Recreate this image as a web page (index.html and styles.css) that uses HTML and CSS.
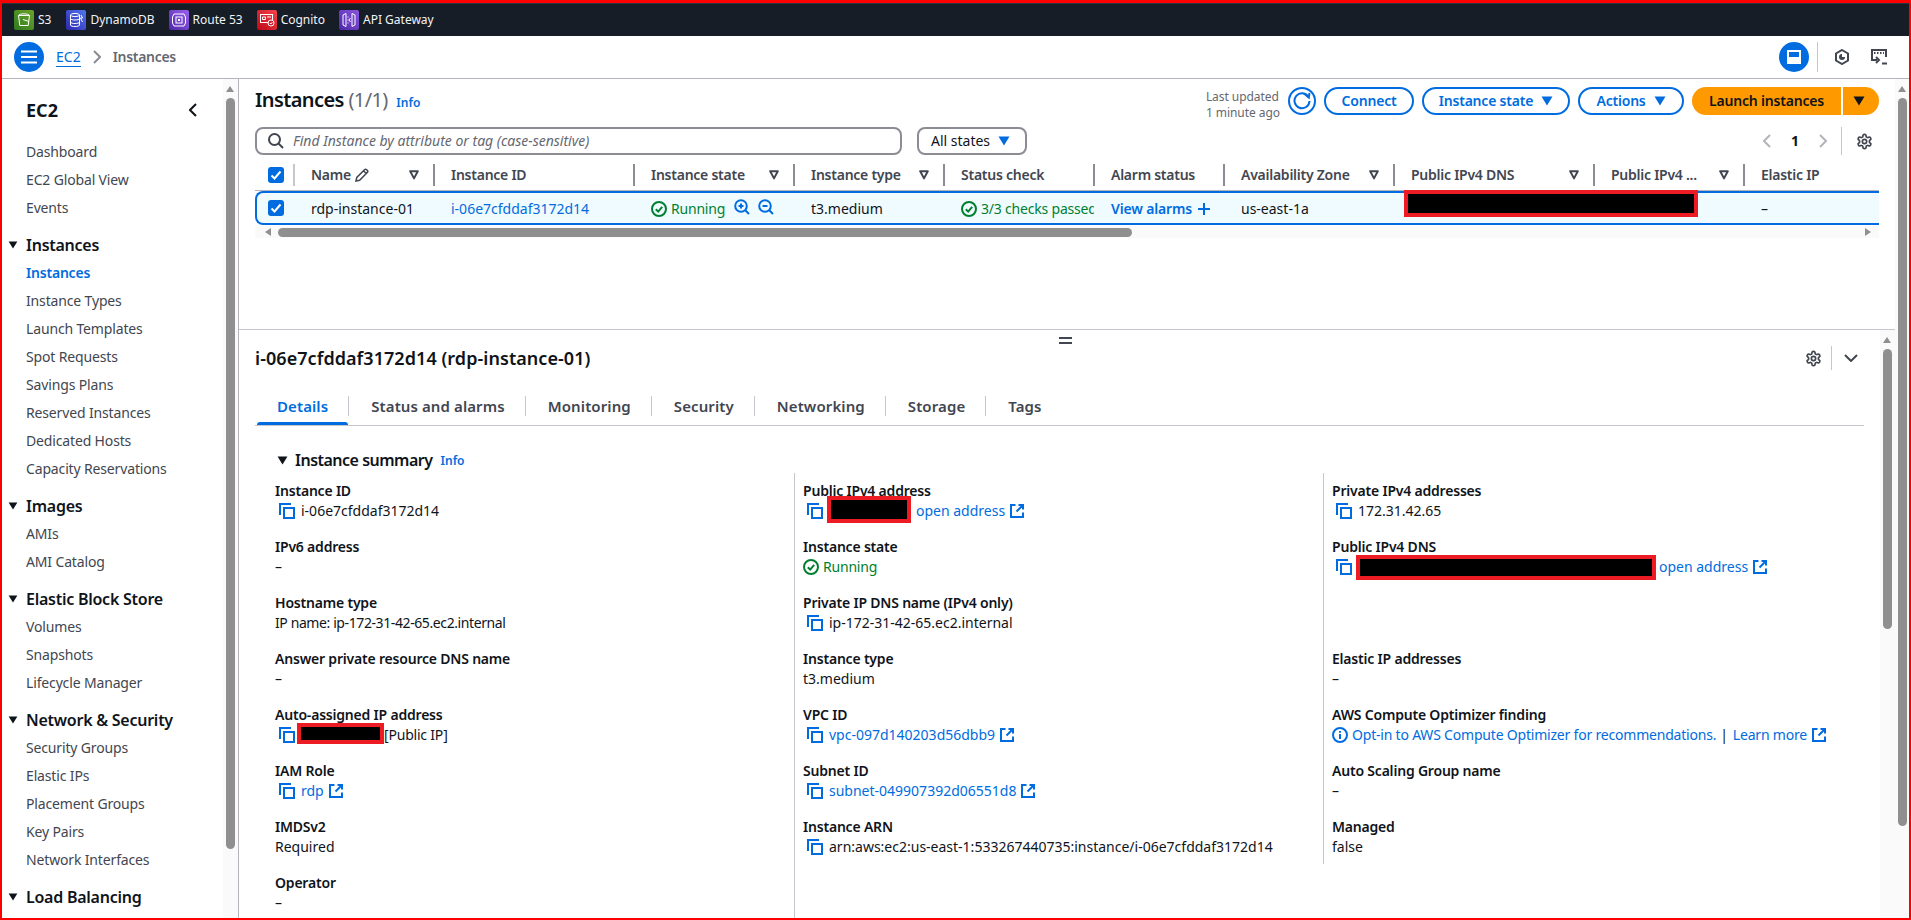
FILE: index.html
```html
<!DOCTYPE html>
<html lang="en">
<head>
<meta charset="utf-8">
<title>Instances | EC2</title>
<link rel="stylesheet" href="styles.css">
</head>
<body>
<svg class="sprite" aria-hidden="true">
  <symbol id="copy" viewBox="0 0 16 16"><path d="M1 12V1h11" fill="none" stroke="currentColor" stroke-width="2"/><rect x="5" y="5" width="10" height="10" fill="none" stroke="currentColor" stroke-width="2"/></symbol>
  <symbol id="ext" viewBox="0 0 14 14"><path d="M5.5 1H1v12h12V8.5" fill="none" stroke="currentColor" stroke-width="2"/><path d="M8.5 1H13v4.5M13 1 6.5 7.5" fill="none" stroke="currentColor" stroke-width="2"/></symbol>
  <symbol id="ok" viewBox="0 0 16 16"><circle cx="8" cy="8" r="7" fill="none" stroke="currentColor" stroke-width="2"/><path d="M4.8 8.2 7.2 10.6 11.2 5.8" fill="none" stroke="currentColor" stroke-width="2"/></symbol>
  <symbol id="filter" viewBox="0 0 10 10"><path d="M1.2 1.2h7.6L5 8.4z" fill="none" stroke="currentColor" stroke-width="2" stroke-linejoin="round"/></symbol>
  <symbol id="caret" viewBox="0 0 12 10"><path d="M0.5 0.5h11L6 9.5z" fill="currentColor"/></symbol>
  <symbol id="gear" viewBox="0 0 24 24"><path d="M12.22 2h-.44a2 2 0 0 0-2 2v.18a2 2 0 0 1-1 1.73l-.43.25a2 2 0 0 1-2 0l-.15-.08a2 2 0 0 0-2.73.73l-.22.38a2 2 0 0 0 .73 2.73l.15.1a2 2 0 0 1 1 1.72v.51a2 2 0 0 1-1 1.74l-.15.09a2 2 0 0 0-.73 2.73l.22.38a2 2 0 0 0 2.73.73l.15-.08a2 2 0 0 1 2 0l.43.25a2 2 0 0 1 1 1.73V20a2 2 0 0 0 2 2h.44a2 2 0 0 0 2-2v-.18a2 2 0 0 1 1-1.73l.43-.25a2 2 0 0 1 2 0l.15.08a2 2 0 0 0 2.73-.73l.22-.39a2 2 0 0 0-.73-2.73l-.15-.08a2 2 0 0 1-1-1.74v-.5a2 2 0 0 1 1-1.74l.15-.09a2 2 0 0 0 .73-2.73l-.22-.38a2 2 0 0 0-2.73-.73l-.15.08a2 2 0 0 1-2 0l-.43-.25a2 2 0 0 1-1-1.73V4a2 2 0 0 0-2-2z" fill="none" stroke="currentColor" stroke-width="2.4"/><circle cx="12" cy="12" r="3" fill="none" stroke="currentColor" stroke-width="2.4"/></symbol>
</svg>

<header class="topbar">
  <a class="svc svc-first"><span class="svc-ico green"><svg viewBox="0 0 20 20"><path d="M4.5 5.5h11l-1.3 10h-8.400zM4.500 5.500c1-2.200 10-2.200 11 0M9 9.500l6 2" fill="none" stroke="#fff" stroke-width="1"/></svg></span>S3</a>
  <a class="svc"><span class="svc-ico blue"><svg viewBox="0 0 20 20"><ellipse cx="9" cy="5" rx="4.500" ry="1.600" fill="none" stroke="#fff"/><path d="M4.500 5v10c0 2 9 2 9 0V5M4.500 8.500c0 2 9 2 9 0M4.500 12c0 2 9 2 9 0M15 5l1.500 3h-2l2 4" fill="none" stroke="#fff"/></svg></span>DynamoDB</a>
  <a class="svc"><span class="svc-ico purple"><svg viewBox="0 0 20 20"><path d="M5 4h10l1.500 3v6L15 16H5l-1.500-3V7z" fill="none" stroke="#fff"/><rect x="7" y="7" width="6" height="6" fill="none" stroke="#fff"/><path d="M9 9h2v2H9z" fill="#fff"/></svg></span>Route 53</a>
  <a class="svc"><span class="svc-ico red"><svg viewBox="0 0 20 20"><rect x="3.500" y="4.500" width="12" height="8" fill="none" stroke="#fff"/><path d="M5.500 7h3v2.500h-3zM10 7h4" fill="none" stroke="#fff"/><circle cx="14" cy="13" r="3" fill="#d3202f" stroke="#fff"/><path d="M12.800 13l1 1 1.500-1.800" fill="none" stroke="#fff"/></svg></span>Cognito</a>
  <a class="svc"><span class="svc-ico violet"><svg viewBox="0 0 20 20"><path d="M7 3.500 4 5v10l3 1.500zM13 3.500 16 5v10l-3 1.500zM9 6.500v1M9 9.500v1M9 12.500v1M11.500 8l-1.500 2 1.500 2" fill="none" stroke="#fff"/></svg></span>API Gateway</a>
</header>

<div class="crumbs">
  <button class="round-btn" aria-label="Menu"><svg class="i-16" viewBox="0 0 16 16"><path d="M0 2.500h16M0 8h16M0 13.500h16" stroke="#fff" stroke-width="2"/></svg></button>
  <a class="crumb-link">EC2</a>
  <svg class="crumb-sep" viewBox="0 0 8 14"><path d="M1 1l6 6-6 6" fill="none" stroke="#8c8c94" stroke-width="2"/></svg>
  <span class="crumb-current">Instances</span>
  <span class="crumb-space"></span>
  <button class="round-btn" aria-label="Panel"><svg class="i-14" viewBox="0 0 14 14"><rect x="1" y="1" width="12" height="12" fill="none" stroke="#fff" stroke-width="2"/><rect x="1" y="7" width="12" height="6" fill="#fff"/></svg></button>
  <span class="crumb-div"></span>
  <svg class="crumb-ico hex" viewBox="0 0 16 16"><path d="M8 1l6 3.500v7L8 15l-6-3.500v-7z" fill="none" stroke="#424650" stroke-width="2"/><path d="M8 5a3 3 0 1 0 3 3H8z" fill="#424650"/></svg>
  <svg class="crumb-ico term" viewBox="0 0 16 16"><path d="M6 11H1V1h14v7" fill="none" stroke="#424650" stroke-width="2"/><path d="M3 4h1.500M6 4h1.500M9 4h1.500M12 4h1" stroke="#424650" stroke-width="2"/><path d="M5 8l3 3-3 3M11 14.500h5" fill="none" stroke="#424650" stroke-width="2"/></svg>
</div>

<div class="layout">
  <aside class="sidebar">
    <nav class="nav">
      <div class="nav-title"><span>EC2</span><svg class="nav-close" viewBox="0 0 8 14"><path d="M7 1 1 7l6 6" fill="none" stroke="#0f141a" stroke-width="2"/></svg></div>
      <a class="nav-item">Dashboard</a>
      <a class="nav-item">EC2 Global View</a>
      <a class="nav-item">Events</a>
      <div class="nav-head"><svg class="nav-tri"><use href="#caret"/></svg>Instances</div>
      <a class="nav-item active">Instances</a>
      <a class="nav-item">Instance Types</a>
      <a class="nav-item">Launch Templates</a>
      <a class="nav-item">Spot Requests</a>
      <a class="nav-item">Savings Plans</a>
      <a class="nav-item">Reserved Instances</a>
      <a class="nav-item">Dedicated Hosts</a>
      <a class="nav-item">Capacity Reservations</a>
      <div class="nav-head"><svg class="nav-tri"><use href="#caret"/></svg>Images</div>
      <a class="nav-item">AMIs</a>
      <a class="nav-item">AMI Catalog</a>
      <div class="nav-head"><svg class="nav-tri"><use href="#caret"/></svg>Elastic Block Store</div>
      <a class="nav-item">Volumes</a>
      <a class="nav-item">Snapshots</a>
      <a class="nav-item">Lifecycle Manager</a>
      <div class="nav-head"><svg class="nav-tri"><use href="#caret"/></svg>Network &amp; Security</div>
      <a class="nav-item">Security Groups</a>
      <a class="nav-item">Elastic IPs</a>
      <a class="nav-item">Placement Groups</a>
      <a class="nav-item">Key Pairs</a>
      <a class="nav-item">Network Interfaces</a>
      <div class="nav-head"><svg class="nav-tri"><use href="#caret"/></svg>Load Balancing</div>
    </nav>
    <div class="vscroll"><span class="arrow-up"></span><span class="thumb thumb-side"></span></div>
  </aside>

  <main class="panes">
    <section class="upper">
      <div class="hdr">
        <h1 class="hdr-title">Instances <span class="count">(1/1)</span> <a class="info">Info</a></h1>
        <div class="hdr-actions">
          <div class="updated">Last updated<br>1 minute ago</div>
          <button class="btn btn-icon" aria-label="Refresh"><svg class="i-18" viewBox="0 0 18 18"><path d="M15.500 5A7.500 7.500 0 1 0 16.500 9" fill="none" stroke="currentColor" stroke-width="2"/><path d="M11 1.500 15.800 5.500 16.500 1" fill="none" stroke="currentColor" stroke-width="2"/></svg></button>
          <button class="btn btn-connect">Connect</button>
          <button class="btn btn-state">Instance state <svg class="caret"><use href="#caret"/></svg></button>
          <button class="btn btn-actions">Actions <svg class="caret"><use href="#caret"/></svg></button>
          <div class="launch"><button class="launch-main">Launch instances</button><button class="launch-drop" aria-label="More"><svg class="caret dark"><use href="#caret"/></svg></button></div>
        </div>
      </div>
      <div class="filters">
        <div class="search"><svg class="i-16 muted" viewBox="0 0 16 16"><circle cx="6.500" cy="6.500" r="5.500" fill="none" stroke="currentColor" stroke-width="2"/><path d="M10.500 10.500 15 15" stroke="currentColor" stroke-width="2"/></svg><span>Find Instance by attribute or tag (case-sensitive)</span></div>
        <div class="states">All states <svg class="caret"><use href="#caret"/></svg></div>
        <div class="pager">
          <svg class="pg-chev" viewBox="0 0 8 14"><path d="M7 1 1 7l6 6" fill="none" stroke="#b4b4bb" stroke-width="2"/></svg>
          <b class="pg-num">1</b>
          <svg class="pg-chev" viewBox="0 0 8 14"><path d="M1 1l6 6-6 6" fill="none" stroke="#b4b4bb" stroke-width="2"/></svg>
          <span class="pg-div"></span>
          <svg class="gear"><use href="#gear"/></svg>
        </div>
      </div>
      <div class="thead">
        <div class="th th-check"><span class="check"><svg viewBox="0 0 16 16"><path d="M3.500 8.500 6.500 11.500 12.500 4.500" fill="none" stroke="#fff" stroke-width="2"/></svg></span></div>
        <div class="th"><span class="th-name">Name <svg class="pencil" viewBox="0 0 14 14"><path d="M1 13l.8-3.600L9.500 1.700a1.500 1.500 0 0 1 2.100 0l.7.700a1.500 1.500 0 0 1 0 2.100L4.600 12.200zM8.500 2.800l2.700 2.700" fill="none" stroke="#424650" stroke-width="1.500"/></svg></span><svg class="flt"><use href="#filter"/></svg></div>
        <div class="th">Instance ID</div>
        <div class="th">Instance state<svg class="flt"><use href="#filter"/></svg></div>
        <div class="th">Instance type<svg class="flt"><use href="#filter"/></svg></div>
        <div class="th">Status check</div>
        <div class="th">Alarm status</div>
        <div class="th">Availability Zone<svg class="flt"><use href="#filter"/></svg></div>
        <div class="th">Public IPv4 DNS<svg class="flt"><use href="#filter"/></svg></div>
        <div class="th">Public IPv4 ...<svg class="flt"><use href="#filter"/></svg></div>
        <div class="th th-last">Elastic IP</div>
      </div>
      <div class="trow">
        <div class="td td-check"><span class="check"><svg viewBox="0 0 16 16"><path d="M3.500 8.500 6.500 11.500 12.500 4.500" fill="none" stroke="#fff" stroke-width="2"/></svg></span></div>
        <div class="td">rdp-instance-01</div>
        <div class="td"><a class="link">i-06e7cfddaf3172d14</a></div>
        <div class="td good"><svg class="i-16"><use href="#ok"/></svg><span class="narrow">Running</span><svg class="zoom-ico first" viewBox="0 0 16 16"><circle cx="7" cy="7" r="5.800" fill="none" stroke="currentColor" stroke-width="2"/><path d="M11 11l4 4M4.500 7h5M7 4.500v5" stroke="currentColor" stroke-width="2"/></svg><svg class="zoom-ico" viewBox="0 0 16 16"><circle cx="7" cy="7" r="5.800" fill="none" stroke="currentColor" stroke-width="2"/><path d="M11 11l4 4M4.500 7h5" stroke="currentColor" stroke-width="2"/></svg></div>
        <div class="td">t3.medium</div>
        <div class="td good"><svg class="i-16"><use href="#ok"/></svg><span class="narrow">3/3 checks passed</span></div>
        <div class="td"><a class="link strong">View alarms</a><svg class="plus" viewBox="0 0 12 12"><path d="M6 0v12M0 6h12" stroke="#006ce0" stroke-width="2"/></svg></div>
        <div class="td">us-east-1a</div>
        <div class="td td-anchor"><span class="redact redact-row"></span></div>
        <div class="td"></div>
        <div class="td">–</div>
      </div>
      <div class="hscroll"><span class="arrow-left"></span><span class="thumb thumb-h"></span><span class="arrow-right"></span></div>
    </section>

    <section class="lower">
      <span class="handle"></span>
      <div class="lower-body">
        <div class="detail-head">
          <h2 class="detail-title">i-06e7cfddaf3172d14 (rdp-instance-01)</h2>
          <svg class="gear"><use href="#gear"/></svg>
          <span class="pg-div short"></span>
          <svg class="chev-down" viewBox="0 0 14 8"><path d="M1 1l6 6 6-6" fill="none" stroke="#424650" stroke-width="2"/></svg>
        </div>
        <div class="tabs">
          <a class="tab active">Details</a>
          <a class="tab">Status and alarms</a>
          <a class="tab">Monitoring</a>
          <a class="tab">Security</a>
          <a class="tab">Networking</a>
          <a class="tab">Storage</a>
          <a class="tab last">Tags</a>
        </div>
        <div class="summary-head"><svg class="sum-tri"><use href="#caret"/></svg><span>Instance summary</span><a class="info">Info</a></div>
        <div class="cols">
          <div class="col col-a">
            <div class="field"><div class="lbl">Instance ID</div><div class="val"><svg class="copy"><use href="#copy"/></svg>i-06e7cfddaf3172d14</div></div>
            <div class="field"><div class="lbl">IPv6 address</div><div class="val">–</div></div>
            <div class="field"><div class="lbl">Hostname type</div><div class="val snug">IP name: ip-172-31-42-65.ec2.internal</div></div>
            <div class="field"><div class="lbl">Answer private resource DNS name</div><div class="val">–</div></div>
            <div class="field"><div class="lbl">Auto-assigned IP address</div><div class="val"><svg class="copy tight"><use href="#copy"/></svg><span class="redact redact-auto"></span><span class="narrow">[Public IP]</span></div></div>
            <div class="field"><div class="lbl">IAM Role</div><div class="val"><svg class="copy"><use href="#copy"/></svg><a class="link">rdp</a><svg class="ext"><use href="#ext"/></svg></div></div>
            <div class="field"><div class="lbl">IMDSv2</div><div class="val">Required</div></div>
            <div class="field"><div class="lbl">Operator</div><div class="val">–</div></div>
          </div>
          <div class="col col-b">
            <div class="field"><div class="lbl">Public IPv4 address</div><div class="val"><svg class="copy tight"><use href="#copy"/></svg><span class="redact redact-ip"></span><a class="link">open address</a><svg class="ext"><use href="#ext"/></svg></div></div>
            <div class="field"><div class="lbl">Instance state</div><div class="val good"><svg class="i-16"><use href="#ok"/></svg><span class="narrow">Running</span></div></div>
            <div class="field"><div class="lbl">Private IP DNS name (IPv4 only)</div><div class="val"><svg class="copy"><use href="#copy"/></svg>ip-172-31-42-65.ec2.internal</div></div>
            <div class="field"><div class="lbl">Instance type</div><div class="val">t3.medium</div></div>
            <div class="field"><div class="lbl">VPC ID</div><div class="val"><svg class="copy"><use href="#copy"/></svg><a class="link">vpc-097d140203d56dbb9</a><svg class="ext"><use href="#ext"/></svg></div></div>
            <div class="field"><div class="lbl">Subnet ID</div><div class="val"><svg class="copy"><use href="#copy"/></svg><a class="link">subnet-049907392d06551d8</a><svg class="ext"><use href="#ext"/></svg></div></div>
            <div class="field"><div class="lbl">Instance ARN</div><div class="val"><svg class="copy"><use href="#copy"/></svg>arn:aws:ec2:us-east-1:533267440735:instance/i-06e7cfddaf3172d14</div></div>
          </div>
          <div class="col col-c">
            <div class="field"><div class="lbl">Private IPv4 addresses</div><div class="val"><svg class="copy"><use href="#copy"/></svg>172.31.42.65</div></div>
            <div class="field"><div class="lbl">Public IPv4 DNS</div><div class="val"><svg class="copy tight"><use href="#copy"/></svg><span class="redact redact-dns"></span><a class="link">open address</a><svg class="ext"><use href="#ext"/></svg></div></div>
            <div class="field"></div>
            <div class="field"><div class="lbl">Elastic IP addresses</div><div class="val">–</div></div>
            <div class="field"><div class="lbl">AWS Compute Optimizer finding</div><div class="val narrow"><svg class="info-ico" viewBox="0 0 16 16"><circle cx="8" cy="8" r="7" fill="none" stroke="currentColor" stroke-width="2"/><path d="M8 7v5M8 4v1.800" stroke="currentColor" stroke-width="2"/></svg><a class="link">Opt-in to AWS Compute Optimizer for recommendations.</a><span class="pipe">|</span><a class="link">Learn more</a><svg class="ext"><use href="#ext"/></svg></div></div>
            <div class="field"><div class="lbl">Auto Scaling Group name</div><div class="val">–</div></div>
            <div class="field"><div class="lbl">Managed</div><div class="val">false</div></div>
          </div>
        </div>
      </div>
      <div class="vscroll inner"><span class="arrow-up"></span><span class="thumb thumb-inner"></span></div>
    </section>
  </main>
  <div class="vscroll outer"><span class="arrow-up"></span><span class="thumb thumb-outer"></span></div>
</div>
</body>
</html>
```

FILE: styles.css
```css
* { box-sizing: border-box; }
html, body { margin: 0; height: 100%; }
body {
  height: 920px;
  overflow: hidden;
  border: 2px solid #ff0000;
  border-top-width: 3px;
  background: #fff;
  color: #0f141a;
  font-family: "Noto Sans", "Open Sans", sans-serif;
  font-size: 14px;
  line-height: 20px;
  display: flex;
  flex-direction: column;
}
h1, h2 { margin: 0; }
button { font: inherit; padding: 0; border: 0; background: none; }
a { color: inherit; text-decoration: none; }
.sprite { width: 0; height: 0; display: block; overflow: hidden; flex: none; }
.i-14 { width: 14px; height: 14px; }
.i-16 { width: 16px; height: 16px; flex: none; }
.i-18 { width: 18px; height: 18px; }
.narrow { letter-spacing: -0.2px; }
.snug { letter-spacing: -0.4px; }

/* top bar */
.topbar {
  height: 33px;
  flex: none;
  background: #161d26;
  border-top: 1px solid #2b3340;
  display: flex;
  align-items: center;
  padding-left: 12px;
  gap: 14px;
  color: #f3f3f7;
  font-size: 12px;
}
.svc { display: flex; align-items: center; gap: 4px; }
.svc-first { margin-right: 1px; }
.svc-ico { width: 20px; height: 20px; border-radius: 2px; display: block; }
.svc-ico svg { width: 20px; height: 20px; display: block; }
.green { background: linear-gradient(45deg, #2f7a1f, #6aa52a); }
.blue { background: linear-gradient(45deg, #2e27ad, #5076f0); }
.purple { background: linear-gradient(45deg, #4d27a8, #9a60f0); }
.red { background: linear-gradient(45deg, #bd0816, #f6454f); }
.violet { background: linear-gradient(45deg, #4d27a8, #8a55e0); }

/* breadcrumbs */
.crumbs {
  height: 43px;
  flex: none;
  border-bottom: 1px solid #b4b4bb;
  display: flex;
  align-items: center;
  padding: 0 22px 0 12px;
}
.round-btn {
  width: 30px; height: 30px; border-radius: 50%;
  background: #006ce0;
  display: flex; align-items: center; justify-content: center;
  flex: none;
}
.crumb-link { margin-left: 12px; color: #006ce0; border-bottom: 1px solid #006ce0; line-height: 19px; }
.crumb-sep { width: 8px; height: 14px; margin: 0 12px; }
.crumb-current { color: #656871; font-weight: 600; letter-spacing: -0.3px; }
.crumb-space { flex: 1; }
.crumb-div { width: 1px; height: 30px; background: #c6c6cd; margin: 0 16px 0 8px; }
.crumb-ico { width: 16px; height: 16px; }
.term { margin-left: 21px; }

/* layout */
.layout { flex: 1; min-height: 0; display: flex; }
.sidebar { width: 237px; flex: none; display: flex; border-right: 1px solid #b4b4bb; overflow: hidden; }
.nav { flex: 1; padding: 17px 0 0 24px; overflow: hidden; }
.nav-title { display: flex; align-items: center; height: 28px; font-size: 18px; font-weight: 700; margin-bottom: 14px; }
.nav-title span { flex: 1; }
.nav-close { width: 8px; height: 14px; margin-right: 26px; }
.nav-item { display: block; height: 28px; line-height: 28px; color: #424650; white-space: nowrap; letter-spacing: -0.15px; }
.nav-item.active { color: #006ce0; font-weight: 600; letter-spacing: -0.2px; }
.nav-head { display: flex; align-items: center; height: 28px; margin: 9px 0 0 -18px; font-size: 16px; font-weight: 600; letter-spacing: -0.25px; white-space: nowrap; }
.nav-tri { width: 10px; height: 8px; margin-right: 8px; flex: none; }

/* scrollbars */
.vscroll { width: 15px; flex: none; background: #fafafa; padding-left: 3px; display: flex; flex-direction: column; }
.vscroll.outer { width: 14px; }
.arrow-up { width: 0; height: 0; margin: 7px 0 6px 0; border: 4.5px solid transparent; border-top-width: 0; border-bottom: 6px solid #8f8f8f; }
.thumb { display: block; background: #8f8f8f; border-radius: 5px; width: 9px; flex: none; }
.thumb-side { height: 751px; }
.thumb-outer { height: 728px; }
.thumb-inner { height: 280px; }
.panes { flex: 1; min-width: 0; display: flex; flex-direction: column; }

/* upper pane */
.upper { height: 251px; flex: none; padding: 8px 16px 0; border-bottom: 1px solid #c6c6cd; }
.hdr { display: flex; align-items: center; justify-content: space-between; height: 28px; }
.hdr-title { font-size: 20px; font-weight: 600; line-height: 28px; letter-spacing: -0.6px; }
.count { font-weight: 400; color: #656871; }
.info { color: #006ce0; font-size: 12px; font-weight: 600; margin-left: 4px; letter-spacing: 0; }
.hdr-actions { display: flex; align-items: center; gap: 8px; }
.updated { font-size: 12px; line-height: 16px; color: #656871; margin: 8px 0 0; white-space: nowrap; letter-spacing: -0.05px; }
.btn {
  height: 28px; border: 2px solid #006ce0; border-radius: 20px; color: #006ce0;
  font-weight: 600; letter-spacing: -0.2px; display: flex; align-items: center; justify-content: center; white-space: nowrap;
}
.btn-icon { width: 28px; }
.btn-connect { width: 90px; }
.btn-state { width: 148px; }
.btn-actions { width: 106px; }
.caret { width: 12px; height: 10px; margin-left: 8px; color: #006ce0; flex: none; }
.caret.dark { color: #0f141a; margin: 0; }
.launch { display: flex; gap: 2px; }
.launch-main { width: 149px; height: 28px; background: #ff9900; border-radius: 20px 0 0 20px; font-weight: 600; letter-spacing: -0.2px; color: #0f141a; }
.launch-drop { width: 36px; height: 28px; background: #ff9900; border-radius: 0 20px 20px 0; display: flex; align-items: center; justify-content: center; padding-right: 4px; }

.filters { display: flex; align-items: center; height: 28px; margin-top: 12px; }
.search {
  width: 647px; height: 28px; border: 2px solid #8c8c94; border-radius: 8px;
  display: flex; align-items: center; gap: 9px; padding-left: 11px;
  color: #656871; font-style: italic;
}
.muted { color: #424650; }
.states {
  width: 110px; height: 28px; margin-left: 15px; border: 2px solid #8c8c94; border-radius: 8px;
  display: flex; align-items: center; padding-left: 12px; white-space: nowrap;
}
.pager { margin-left: auto; display: flex; align-items: center; height: 28px; padding-right: 6px; }
.pg-chev { width: 8px; height: 14px; }
.pg-num { width: 20px; margin: 0 14px; text-align: center; }
.pg-div { width: 1px; height: 28px; background: #c6c6cd; margin: 0 14px 0 14px; }
.pg-div.short { height: 24px; margin: 0 12px 0 9px; }
.gear { width: 17px; height: 17px; color: #424650; flex: none; }

/* table */
.thead, .trow {
  display: grid;
  grid-template-columns: 39px 140px 200px 160px 150px 150px 130px 170px 200px 150px 135px;
  width: 1624px;
}
.thead { height: 31px; margin-top: 5px; border-bottom: 1px solid #b4b4bb; align-items: center; }
.th {
  height: 22px; border-right: 2px solid #8c8c94; padding: 0 14px 0 17px;
  display: flex; align-items: center; justify-content: space-between;
  font-weight: 600; letter-spacing: -0.25px; color: #424650; white-space: nowrap; margin-right: -1px;
}
.th-check { padding: 0 0 0 13px; border-right-color: #c6c6cd; }
.th-last { border-right: 0; }
.th-name { display: flex; align-items: center; gap: 4px; }
.pencil { width: 14px; height: 14px; }
.flt { width: 10px; height: 10px; color: #424650; flex: none; }
.check { width: 16px; height: 16px; border-radius: 3px; background: #006ce0; display: block; flex: none; }
.check svg { display: block; width: 16px; height: 16px; }
.trow {
  height: 34px;
  grid-template-columns: 37px 140px 200px 160px 150px 150px 130px 170px 200px 150px 135px;
  border: solid #006ce0; border-width: 2px 0 2px 2px; border-radius: 8px 0 0 8px;
  background: #f0fbff; align-items: center;
}
.td { padding: 1px 0 0 17px; display: flex; align-items: center; white-space: nowrap; overflow: hidden; height: 30px; }
.td-check { padding: 0 0 0 11px; }
.td-anchor { position: relative; overflow: visible; }
.good { color: #00802f; }
.good > .i-16 { margin-right: 4px; }
.link { color: #006ce0; }
.strong { font-weight: 600; letter-spacing: -0.15px; }
.plus { width: 12px; height: 12px; margin-left: 6px; }
.zoom-ico { width: 16px; height: 16px; color: #006ce0; margin-left: 8px; flex: none; margin-top: -3px; }
.zoom-ico.first { margin-left: 9px; }
.redact { background: #000; border: 4px solid #ed1c24; display: block; flex: none; }
.redact-row { position: absolute; left: 10px; top: -3px; width: 294px; height: 27px; }
.redact-auto { width: 87px; height: 21px; margin-top: -3px; }
.redact-ip { width: 84px; height: 27px; margin: -3px 5px 0 2px; }
.redact-dns { width: 300px; height: 25px; margin: 0 3px 0 2px; }

.hscroll { height: 12px; margin-top: 1px; width: 1624px; background: #fafafa; display: flex; align-items: center; padding-left: 10px; }
.arrow-left { width: 0; height: 0; border: 4.5px solid transparent; border-left-width: 0; border-right: 6px solid #8f8f8f; }
.arrow-right { width: 0; height: 0; border: 4.5px solid transparent; border-right-width: 0; border-left: 6px solid #8f8f8f; margin-left: 733px; }
.thumb-h { height: 9px; width: 854px; margin-left: 7px; }

/* lower pane */
.lower { flex: 1; min-height: 0; display: flex; position: relative; overflow: hidden; }
.handle { position: absolute; left: 820px; top: 7px; width: 13px; height: 7px; border: solid #424650; border-width: 2px 0; }
.lower-body { flex: 1; min-width: 0; padding: 14px 16px 0; }
.detail-head { display: flex; align-items: center; height: 28px; padding-right: 6px; }
.detail-title { flex: 1; font-size: 18px; font-weight: 600; line-height: 28px; letter-spacing: 0.05px; }
.chev-down { width: 14px; height: 8px; }
.tabs { display: flex; margin-top: 20px; height: 34px; padding: 4px 0 0 2px; border-bottom: 1px solid #c6c6cd; align-items: flex-start; }
.tab { height: 20px; line-height: 20px; padding: 0 20px 0 22px; border-right: 1px solid #c6c6cd; color: #424650; font-size: 15px; font-weight: 600; letter-spacing: 0.1px; white-space: nowrap; position: relative; }
.tab.last { border-right: 0; }
.tab.active { color: #006ce0; padding-left: 20px; }
.tab.active::after { content: ""; position: absolute; left: 0; right: 0; bottom: -9px; height: 3px; background: #006ce0; border-radius: 3px 3px 0 0; }
.summary-head { display: flex; align-items: center; height: 24px; margin: 22px 0 0 22px; font-size: 16px; font-weight: 600; letter-spacing: -0.5px; }
.sum-tri { width: 11px; height: 9px; margin-right: 7px; color: #0f141a; }
.summary-head .info { margin-left: 8px; margin-top: 2px; }
.cols { display: grid; grid-template-columns: 520px 529px 1fr; margin: 1px 0 0 20px; align-items: start; }
.col { padding: 8px 0 0; }
.col-a { border-right: 1px solid #c6c6cd; align-self: stretch; height: 470px; }
.col-b { padding-left: 8px; }
.col-c { padding: 8px 0 7px 8px; border-left: 1px solid #c6c6cd; margin-left: -1px; }
.col-c .field:last-child { height: 40px; }
.field { height: 56px; }
.lbl { font-weight: 600; letter-spacing: -0.2px; height: 20px; white-space: nowrap; }
.val { display: flex; align-items: center; height: 20px; white-space: nowrap; }
.copy { width: 16px; height: 16px; color: #006ce0; margin: 0 6px 0 4px; flex: none; }
.copy.tight { margin-right: 2px; }
.ext { width: 14px; height: 14px; color: #006ce0; margin-left: 5px; flex: none; }
.info-ico { width: 16px; height: 16px; color: #006ce0; margin-right: 4px; flex: none; }
.pipe { margin: 0 5px 0 4px; }
```
